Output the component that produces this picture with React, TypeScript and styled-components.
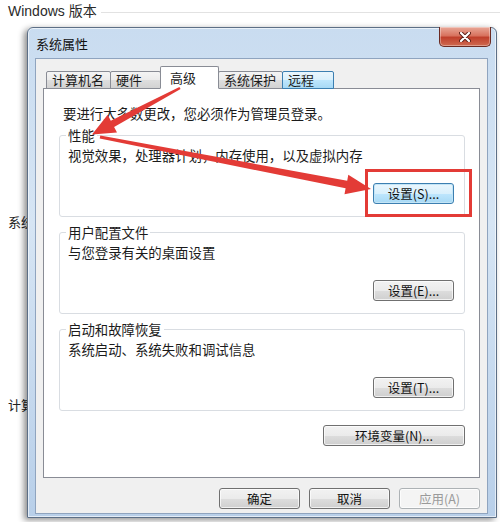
import React from "react";
import styled, { createGlobalStyle, css } from "styled-components";

const GlobalStyle = createGlobalStyle`
  body {
    margin: 0;
    background: #ffffff;
    font-family: "Noto Sans CJK SC", "Noto Sans", sans-serif;
    color: #1b1b1b;
  }
`;

const tabs = [
  { label: "计算机名", width: 65 },
  { label: "硬件", width: 51 },
  { label: "高级", width: 59, active: true },
  { label: "系统保护", width: 65 },
  { label: "远程", width: 52, hover: true },
];

const groups = [
  {
    title: "性能",
    text: "视觉效果，处理器计划，内存使用，以及虚拟内存",
    button: "设置(S)...",
    focused: true,
  },
  {
    title: "用户配置文件",
    text: "与您登录有关的桌面设置",
    button: "设置(E)...",
  },
  {
    title: "启动和故障恢复",
    text: "系统启动、系统失败和调试信息",
    button: "设置(T)...",
  },
];

const App = () => {
  return (
    <>
      <GlobalStyle />
      <Page>
        <Header>
          <HeaderTitle>Windows 版本</HeaderTitle>
          <HeaderRule />
        </Header>
        <Desk>
          <SideColumn>
            <SideLabel $top={187}>系统</SideLabel>
            <SideLabel $top={167}>计算</SideLabel>
          </SideColumn>
          <Window>
            <TitleBar>
              <WindowTitle>系统属性</WindowTitle>
              <CloseButton>
                <svg width="12" height="10" viewBox="0 0 12 10">
                  <path d="M2 1 L10 9 M10 1 L2 9" stroke="#5a1d15" strokeWidth="4" strokeLinecap="round" />
                  <path d="M2 1 L10 9 M10 1 L2 9" stroke="#ffffff" strokeWidth="2.2" strokeLinecap="round" />
                </svg>
              </CloseButton>
            </TitleBar>
            <Client>
              <TabStrip>
                {tabs.map((t) => (
                  <Tab key={t.label} $width={t.width} $active={t.active} $hover={t.hover}>
                    {t.label}
                  </Tab>
                ))}
              </TabStrip>
              <Panel>
                <Intro>要进行大多数更改，您必须作为管理员登录。</Intro>
                {groups.map((g) => (
                  <Group key={g.title}>
                    <Legend>{g.title}</Legend>
                    <GroupText>{g.text}</GroupText>
                    <ButtonRow>
                      <Button $width={81} $focused={g.focused}>
                        {g.button}
                      </Button>
                    </ButtonRow>
                  </Group>
                ))}
                <EnvRow>
                  <Button $width={142}>环境变量(N)...</Button>
                </EnvRow>
              </Panel>
              <DialogButtons>
                <Button $width={81}>确定</Button>
                <Button $width={81}>取消</Button>
                <Button $width={81} $disabled>
                  应用(A)
                </Button>
              </DialogButtons>
            </Client>
          </Window>
        </Desk>
        {/* red callouts drawn over the dialog */}
        <Marks width="500" height="522" viewBox="0 0 500 522">
          <rect x="366.5" y="170.5" width="104" height="45" fill="none" stroke="#e33b36" strokeWidth="3" />
          <polygon
            points="180.6,89.1 114.1,126.9 117,132.6 92,134.5 107.7,114.8 110.8,120.7 179.4,86.9"
            fill="#e33b36"
          />
          <polygon
            points="99.7,138.5 345.6,188.3 344.5,194.3 371,189 348.3,174.7 347.2,180.7 100.3,135.5"
            fill="#e33b36"
          />
        </Marks>
      </Page>
    </>
  );
};

export default App;

const Page = styled.div`
  position: relative;
  width: 500px;
  height: 522px;
  overflow: hidden;
  background: #ffffff;
`;

const Header = styled.div`
  display: flex;
  align-items: center;
  height: 20px;
  padding-left: 8px;
`;

const HeaderTitle = styled.span`
  font-family: "Liberation Sans", "Noto Sans CJK SC", sans-serif;
  font-size: 14px;
  color: #2a2a2a;
  white-space: nowrap;
`;

const HeaderRule = styled.div`
  flex: 1;
  height: 1px;
  margin: 4px 0 0 4px;
  background: #e2e2e2;
`;

const Desk = styled.div`
  display: flex;
  padding-top: 7px;
`;

const SideColumn = styled.div`
  display: flex;
  flex-direction: column;
  width: 27px;
  flex-shrink: 0;
`;

const SideLabel = styled.span<{ $top: number }>`
  margin: ${(p) => p.$top}px 0 0 8px;
  font-size: 13px;
  line-height: 16px;
  white-space: nowrap;
  color: #222;
`;

const Window = styled.div`
  position: relative;
  z-index: 1;
  width: 470px;
  height: 491px;
  box-sizing: border-box;
  border: 1px solid #5d6f86;
  border-radius: 6px 6px 0 0;
  background: linear-gradient(180deg, #c9dcf0 0%, #d6e5f4 40%, #b8cfe9 100%);
  box-shadow: -3px 2px 6px rgba(0, 0, 0, 0.45), inset 0 0 0 1px rgba(255, 255, 255, 0.6);
`;

const TitleBar = styled.div`
  display: flex;
  align-items: flex-start;
  height: 30px;
  padding-left: 8px;
`;

const WindowTitle = styled.span`
  margin-top: 8px;
  font-size: 13px;
  line-height: 16px;
  color: #111;
`;

const CloseButton = styled.div`
  display: flex;
  align-items: center;
  justify-content: center;
  width: 52px;
  height: 20px;
  margin: -1px 5px 0 auto;
  box-sizing: border-box;
  border: 1px solid #6b2a22;
  border-top: none;
  border-radius: 0 0 5px 5px;
  background: linear-gradient(180deg, #e9a898 0%, #d8735f 45%, #c0402c 55%, #cf6a50 100%);
  box-shadow: inset 0 0 0 1px rgba(255, 255, 255, 0.35);
`;

const Client = styled.div`
  display: flex;
  flex-direction: column;
  height: 456px;
  margin: 0 8px 0 7px;
  box-sizing: border-box;
  padding: 8px 7px 0 7px;
  border: 1px solid #8fa4bf;
  background: #f0f0f0;
`;

const TabStrip = styled.div`
  display: flex;
  align-items: flex-end;
  height: 22px;
  padding-left: 3px;
  position: relative;
  z-index: 1;
  margin-bottom: -1px;
`;

const Tab = styled.div<{ $width: number; $active?: boolean; $hover?: boolean }>`
  width: ${(p) => p.$width}px;
  height: 18px;
  box-sizing: border-box;
  padding-left: 5px;
  border: 1px solid #898c95;
  border-radius: 2px 2px 0 0;
  margin-right: -1px;
  font-size: 13px;
  line-height: 16px;
  color: #1b1b1b;
  background: linear-gradient(180deg, #f4f4f4 0%, #ebebeb 50%, #dedede 51%, #d2d2d2 100%);

  ${(p) =>
    p.$hover &&
    css`
      border-color: #3c7fb1;
      background: linear-gradient(180deg, #eaf6fd 0%, #d9f0fc 50%, #bee6fd 51%, #a7d9f5 100%);
    `}

  ${(p) =>
    p.$active &&
    css`
      position: relative;
      z-index: 2;
      height: 23px;
      padding: 3px 0 0 9px;
      border-bottom-color: #ffffff;
      background: #ffffff;
    `}
`;

const Panel = styled.div`
  height: 390px;
  box-sizing: border-box;
  padding: 16px 14px 0 15px;
  border: 1px solid #898c95;
  background: #ffffff;
`;

const Intro = styled.div`
  margin-left: 4px;
  font-size: 13.4px;
  line-height: 16px;
  white-space: nowrap;
`;

const Group = styled.fieldset`
  margin: 6px 0 0;
  padding: 4px 10px 12px 8px;
  border: 1px solid #d9dde2;
  border-radius: 3px;
  min-width: 0;

  & + & {
    margin-top: 7px;
  }
`;

const Legend = styled.legend`
  margin-left: -2px;
  padding: 0 2px;
  font-size: 13.4px;
  line-height: 16px;
`;

const GroupText = styled.div`
  font-size: 13.4px;
  line-height: 16px;
  white-space: nowrap;
`;

const ButtonRow = styled.div`
  display: flex;
  justify-content: flex-end;
  margin-top: 20px;
`;

const EnvRow = styled.div`
  display: flex;
  justify-content: flex-end;
  margin-top: 14px;
`;

const DialogButtons = styled.div`
  display: flex;
  justify-content: flex-end;
  gap: 9px;
  margin-top: 10px;
`;

const Button = styled.div<{ $width: number; $focused?: boolean; $disabled?: boolean }>`
  display: flex;
  align-items: center;
  justify-content: center;
  width: ${(p) => p.$width}px;
  height: 21px;
  box-sizing: border-box;
  border: 1px solid #707070;
  border-radius: 3px;
  font-size: 12.5px;
  color: #111;
  background: linear-gradient(180deg, #f2f2f2 0%, #ebebeb 50%, #dddddd 51%, #cfcfcf 100%);
  box-shadow: inset 0 0 0 1px rgba(255, 255, 255, 0.7);

  ${(p) =>
    p.$focused &&
    css`
      border-color: #3c7fb1;
      background: linear-gradient(180deg, #eaf6fd 0%, #d9f0fc 50%, #bee6fd 51%, #a7d9f5 100%);
      box-shadow: inset 0 0 0 1px #c4e5f6;
    `}

  ${(p) =>
    p.$disabled &&
    css`
      border-color: #adb2b5;
      color: #9a9a9a;
      background: #f4f4f4;
    `}
`;

const Marks = styled.svg`
  position: absolute;
  top: 0;
  left: 0;
  z-index: 5;
  pointer-events: none;
`;
